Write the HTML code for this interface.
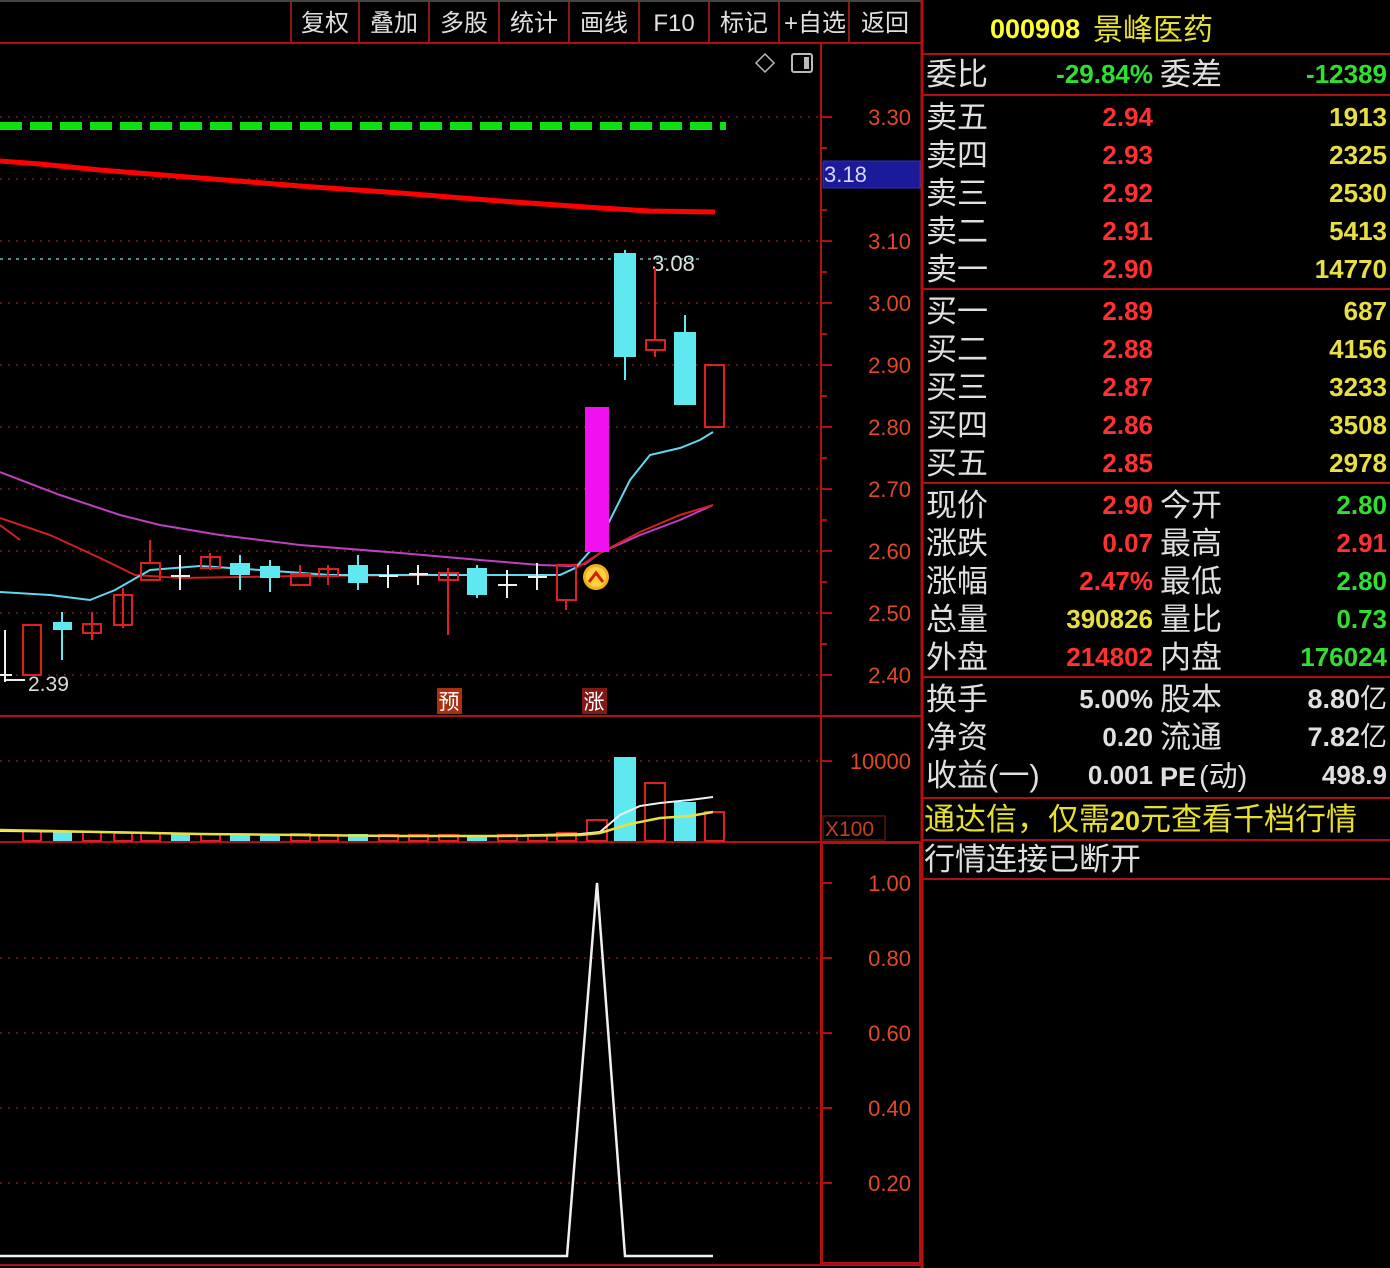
<!DOCTYPE html>
<html><head><meta charset="utf-8"><style>
html,body{margin:0;padding:0;background:#000;width:1390px;height:1268px;overflow:hidden}
svg{display:block}
.t{font-family:"Liberation Sans","Noto Sans CJK SC",sans-serif}
</style></head><body>
<svg width="1390" height="1268" viewBox="0 0 1390 1268" xmlns="http://www.w3.org/2000/svg" class="t">
<rect width="1390" height="1268" fill="#000"/>
<!-- toolbar -->
<g stroke="#8a1a10" stroke-width="2">
<line x1="291" y1="0" x2="291" y2="42"/><line x1="359" y1="0" x2="359" y2="42"/><line x1="429" y1="0" x2="429" y2="42"/><line x1="499" y1="0" x2="499" y2="42"/><line x1="569" y1="0" x2="569" y2="42"/><line x1="639" y1="0" x2="639" y2="42"/><line x1="709" y1="0" x2="709" y2="42"/><line x1="779" y1="0" x2="779" y2="42"/><line x1="849" y1="0" x2="849" y2="42"/>
</g>
<line x1="0" y1="1" x2="922" y2="1" stroke="#444" stroke-width="2"/>
<g fill="#e0e0e0" font-size="24" text-anchor="middle" font-family="Liberation Sans,Noto Sans CJK SC,sans-serif">
<text x="325" y="31">复权</text><text x="394" y="31">叠加</text><text x="464" y="31">多股</text><text x="534" y="31">统计</text><text x="604" y="31">画线</text><text x="674" y="31">F10</text><text x="744" y="31">标记</text><text x="815" y="31">+自选</text><text x="885" y="31">返回</text>
</g>
<line x1="0" y1="43" x2="922" y2="43" stroke="#b01010" stroke-width="2"/>
<!-- frame lines -->
<line x1="821" y1="43" x2="821" y2="1266" stroke="#b01010" stroke-width="2"/>
<line x1="922" y1="0" x2="922" y2="1268" stroke="#b01010" stroke-width="3"/>
<line x1="0" y1="716" x2="922" y2="716" stroke="#b01010" stroke-width="2"/>
<line x1="0" y1="842" x2="922" y2="842" stroke="#b01010" stroke-width="2"/>
<rect x="822" y="843" width="98" height="420" fill="none" stroke="#b01010" stroke-width="2"/>
<line x1="0" y1="1265" x2="922" y2="1265" stroke="#b01010" stroke-width="2"/>
<!-- grid dotted -->
<g stroke="#7a1a10" stroke-width="1.5" stroke-dasharray="2 6">
<line x1="0" y1="117" x2="820" y2="117"/><line x1="0" y1="179" x2="820" y2="179"/><line x1="0" y1="241" x2="820" y2="241"/><line x1="0" y1="303" x2="820" y2="303"/><line x1="0" y1="365" x2="820" y2="365"/><line x1="0" y1="427" x2="820" y2="427"/><line x1="0" y1="489" x2="820" y2="489"/><line x1="0" y1="551" x2="820" y2="551"/><line x1="0" y1="613" x2="820" y2="613"/><line x1="0" y1="675" x2="820" y2="675"/>
<line x1="0" y1="761" x2="820" y2="761"/>
<line x1="0" y1="958" x2="820" y2="958"/><line x1="0" y1="1033" x2="820" y2="1033"/><line x1="0" y1="1108" x2="820" y2="1108"/><line x1="0" y1="1183" x2="820" y2="1183"/>
</g>
<!-- axis ticks & labels -->
<g stroke="#b01010" stroke-width="2">
<line x1="822" y1="117" x2="832" y2="117"/><line x1="822" y1="241" x2="832" y2="241"/><line x1="822" y1="303" x2="832" y2="303"/><line x1="822" y1="365" x2="832" y2="365"/><line x1="822" y1="427" x2="832" y2="427"/><line x1="822" y1="489" x2="832" y2="489"/><line x1="822" y1="551" x2="832" y2="551"/><line x1="822" y1="613" x2="832" y2="613"/><line x1="822" y1="675" x2="832" y2="675"/>
<line x1="822" y1="148" x2="827" y2="148"/><line x1="822" y1="210" x2="827" y2="210"/><line x1="822" y1="272" x2="827" y2="272"/><line x1="822" y1="334" x2="827" y2="334"/><line x1="822" y1="396" x2="827" y2="396"/><line x1="822" y1="458" x2="827" y2="458"/><line x1="822" y1="520" x2="827" y2="520"/><line x1="822" y1="582" x2="827" y2="582"/><line x1="822" y1="644" x2="827" y2="644"/>
<line x1="822" y1="761" x2="832" y2="761"/>
<line x1="822" y1="883" x2="832" y2="883"/><line x1="822" y1="958" x2="832" y2="958"/><line x1="822" y1="1033" x2="832" y2="1033"/><line x1="822" y1="1108" x2="832" y2="1108"/><line x1="822" y1="1183" x2="832" y2="1183"/>
</g>
<g fill="#e04828" font-size="22" text-anchor="end">
<text x="911" y="125">3.30</text><text x="911" y="249">3.10</text><text x="911" y="311">3.00</text><text x="911" y="373">2.90</text><text x="911" y="435">2.80</text><text x="911" y="497">2.70</text><text x="911" y="559">2.60</text><text x="911" y="621">2.50</text><text x="911" y="683">2.40</text>
<text x="911" y="769">10000</text>
<text x="911" y="891">1.00</text><text x="911" y="966">0.80</text><text x="911" y="1041">0.60</text><text x="911" y="1116">0.40</text><text x="911" y="1191">0.20</text>
</g>
<rect x="823" y="161" width="97" height="27" fill="#1a1a9a" stroke="#3030c0"/>
<text x="824" y="182" fill="#d8d8ff" font-size="22">3.18</text>
<rect x="823" y="816" width="62" height="24" fill="none" stroke="#802010"/>
<text x="825" y="836" fill="#c04020" font-size="21">X100</text>
<!-- top icons -->
<path d="M765 54 L774 63 L765 72 L756 63 Z" fill="none" stroke="#bbb" stroke-width="1.5"/>
<rect x="792" y="54" width="20" height="18" rx="2" fill="none" stroke="#bbb" stroke-width="2"/><rect x="804" y="57" width="5" height="12" fill="#bbb"/>
<!-- green dashed -->
<line x1="0" y1="126" x2="726" y2="126" stroke="#10e010" stroke-width="8" stroke-dasharray="22 8"/>
<!-- red thick MA -->
<polyline points="0,161 40,164 100,170 200,178 300,186 400,193 500,201 600,208 650,211 715,212" fill="none" stroke="#f00" stroke-width="5"/>
<!-- 3.08 line -->
<line x1="0" y1="259" x2="700" y2="259" stroke="#70c0c0" stroke-width="1.5" stroke-dasharray="3 5"/>
<text x="652" y="271" fill="#e0e0e0" font-size="22">3.08</text>
<!-- MAs -->
<polyline points="0,472 60,495 120,515 160,525 220,535 300,545 400,553 480,560 540,565 570,566 585,564 600,553 640,535 680,520 713,505" fill="none" stroke="#c040c0" stroke-width="2"/>
<polyline points="0,518 50,535 100,558 135,575 180,578 300,576 450,575 560,575 580,566 600,553 640,532 680,515 713,505" fill="none" stroke="#d02020" stroke-width="2"/>
<polyline points="0,592 50,595 90,600 115,590 150,570 200,566 260,570 330,575 440,575 560,575 575,568 600,540 630,480 650,455 680,448 700,440 713,432" fill="none" stroke="#60d8f0" stroke-width="2"/>
<polyline points="0,525 20,540" fill="none" stroke="#d02020" stroke-width="2"/>
<!-- candles -->
<g stroke-width="2">
<line x1="5" y1="630" x2="5" y2="682" stroke="#eee"/><line x1="0" y1="675" x2="12" y2="675" stroke="#eee"/><line x1="5" y1="680" x2="25" y2="680" stroke="#eee"/>
<text x="28" y="691" fill="#ddd" font-size="21" stroke="none">2.39</text>
<rect x="23" y="625" width="18" height="50" fill="none" stroke="#e02020"/>
<line x1="62" y1="612" x2="62" y2="660" stroke="#60e8f0"/><rect x="53" y="622" width="19" height="8" fill="#60e8f0" stroke="none"/>
<line x1="92" y1="612" x2="92" y2="640" stroke="#e02020"/><rect x="83" y="624" width="18" height="9" fill="none" stroke="#e02020"/>
<line x1="123" y1="588" x2="123" y2="628" stroke="#e02020"/><rect x="114" y="595" width="18" height="30" fill="none" stroke="#e02020"/>
<line x1="150" y1="540" x2="150" y2="563" stroke="#e02020"/><rect x="141" y="563" width="19" height="17" fill="none" stroke="#e02020"/>
<line x1="180" y1="555" x2="180" y2="590" stroke="#eee"/><line x1="171" y1="576" x2="190" y2="576" stroke="#eee"/>
<line x1="210" y1="553" x2="210" y2="570" stroke="#e02020"/><rect x="201" y="557" width="19" height="11" fill="none" stroke="#e02020"/>
<line x1="240" y1="555" x2="240" y2="590" stroke="#60e8f0"/><rect x="230" y="563" width="20" height="12" fill="#60e8f0" stroke="none"/>
<line x1="270" y1="560" x2="270" y2="592" stroke="#60e8f0"/><rect x="260" y="566" width="20" height="12" fill="#60e8f0" stroke="none"/>
<line x1="300" y1="565" x2="300" y2="574" stroke="#e02020"/><rect x="291" y="574" width="19" height="11" fill="none" stroke="#e02020"/>
<line x1="328" y1="565" x2="328" y2="585" stroke="#e02020"/><rect x="319" y="569" width="19" height="7" fill="none" stroke="#e02020"/>
<line x1="358" y1="555" x2="358" y2="590" stroke="#60e8f0"/><rect x="348" y="565" width="20" height="18" fill="#60e8f0" stroke="none"/>
<line x1="388" y1="565" x2="388" y2="588" stroke="#eee"/><line x1="379" y1="576" x2="398" y2="576" stroke="#eee"/>
<line x1="418" y1="565" x2="418" y2="585" stroke="#eee"/><line x1="409" y1="574" x2="428" y2="574" stroke="#eee"/>
<line x1="448" y1="568" x2="448" y2="635" stroke="#e02020"/><rect x="439" y="573" width="19" height="7" fill="none" stroke="#e02020"/>
<line x1="477" y1="565" x2="477" y2="598" stroke="#60e8f0"/><rect x="467" y="568" width="20" height="27" fill="#60e8f0" stroke="none"/>
<line x1="507" y1="570" x2="507" y2="598" stroke="#eee"/><line x1="498" y1="585" x2="517" y2="585" stroke="#eee"/>
<line x1="537" y1="563" x2="537" y2="590" stroke="#eee"/><line x1="528" y1="577" x2="547" y2="577" stroke="#eee"/>
<line x1="566" y1="600" x2="566" y2="610" stroke="#e02020"/><rect x="557" y="565" width="19" height="35" fill="none" stroke="#e02020"/>
<rect x="585" y="407" width="24" height="145" fill="#f010f0" stroke="none"/>
<line x1="625" y1="250" x2="625" y2="380" stroke="#60e8f0"/><rect x="614" y="253" width="22" height="104" fill="#60e8f0" stroke="none"/>
<line x1="655" y1="268" x2="655" y2="357" stroke="#e02020"/><rect x="646" y="340" width="19" height="10" fill="#000" stroke="#e02020"/>
<line x1="685" y1="315" x2="685" y2="405" stroke="#60e8f0"/><rect x="674" y="332" width="22" height="73" fill="#60e8f0" stroke="none"/>
<rect x="705" y="365" width="19" height="62" fill="none" stroke="#e02020"/>
</g>
<!-- up signal -->
<circle cx="596" cy="577" r="13" fill="#f0b020"/>
<circle cx="596" cy="577" r="10" fill="#ffd040"/>
<path d="M589 582 L596 573 L603 582" fill="none" stroke="#d02000" stroke-width="3"/>
<!-- labels -->
<rect x="437" y="688" width="25" height="26" fill="#a83010"/><text x="449" y="709" fill="#fff" font-size="21" text-anchor="middle">预</text>
<rect x="582" y="688" width="25" height="26" fill="#801818"/><text x="594" y="709" fill="#fff" font-size="21" text-anchor="middle">涨</text>
<!-- volume -->
<g stroke-width="2">
<rect x="23" y="831" width="18" height="10" fill="none" stroke="#e02020"/>
<rect x="53" y="832" width="19" height="9" fill="#60e8f0" stroke="none"/>
<rect x="83" y="832" width="18" height="9" fill="none" stroke="#e02020"/>
<rect x="114" y="833" width="18" height="8" fill="none" stroke="#e02020"/>
<rect x="141" y="833" width="19" height="8" fill="none" stroke="#e02020"/>
<rect x="171" y="833" width="19" height="8" fill="#60e8f0" stroke="none"/>
<rect x="201" y="834" width="19" height="7" fill="none" stroke="#e02020"/>
<rect x="230" y="834" width="20" height="7" fill="#60e8f0" stroke="none"/>
<rect x="260" y="834" width="20" height="7" fill="#60e8f0" stroke="none"/>
<rect x="291" y="834" width="19" height="7" fill="none" stroke="#e02020"/>
<rect x="319" y="835" width="19" height="6" fill="none" stroke="#e02020"/>
<rect x="348" y="834" width="20" height="7" fill="#60e8f0" stroke="none"/>
<rect x="379" y="835" width="19" height="6" fill="none" stroke="#e02020"/>
<rect x="409" y="835" width="19" height="6" fill="none" stroke="#e02020"/>
<rect x="439" y="835" width="19" height="6" fill="none" stroke="#e02020"/>
<rect x="467" y="835" width="20" height="6" fill="#60e8f0" stroke="none"/>
<rect x="498" y="835" width="19" height="6" fill="none" stroke="#e02020"/>
<rect x="528" y="835" width="19" height="6" fill="none" stroke="#e02020"/>
<rect x="557" y="833" width="19" height="8" fill="none" stroke="#e02020"/>
<rect x="587" y="820" width="20" height="21" fill="none" stroke="#e02020"/>
<rect x="614" y="757" width="22" height="84" fill="#60e8f0" stroke="none"/>
<rect x="645" y="783" width="20" height="58" fill="none" stroke="#e02020"/>
<rect x="674" y="802" width="22" height="39" fill="#60e8f0" stroke="none"/>
<rect x="705" y="812" width="19" height="29" fill="none" stroke="#e02020"/>
</g>
<polyline points="0,831 100,832 200,834 300,835 400,836 500,836 580,834 600,832 620,815 640,806 660,803 690,800 713,797" fill="none" stroke="#f0f0f0" stroke-width="2"/>
<polyline points="0,830 100,832 200,834 300,835 400,836 500,836 580,835 600,833 630,824 660,818 690,816 713,812" fill="none" stroke="#e8e040" stroke-width="2.5"/>
<!-- indicator -->
<polyline points="0,1256 567,1256 597,883 625,1256 713,1256" fill="none" stroke="#f0f0f0" stroke-width="2.5"/>
<!-- right panel -->
<text x="990" y="38" fill="#ffff30" font-size="27" font-weight="bold">000908</text>
<text x="1093" y="40" fill="#e8e030" font-size="30">景峰医药</text>
<g stroke="#b01010" stroke-width="2">
<line x1="922" y1="54" x2="1390" y2="54"/><line x1="922" y1="95" x2="1390" y2="95"/><line x1="922" y1="289" x2="1390" y2="289"/><line x1="922" y1="483" x2="1390" y2="483"/><line x1="922" y1="677" x2="1390" y2="677"/><line x1="922" y1="798" x2="1390" y2="798"/><line x1="922" y1="840" x2="1390" y2="840"/><line x1="922" y1="879" x2="1390" y2="879"/>
</g>
<g fill="#e0e0e0" font-size="31">
<text x="926" y="85">委比</text><text x="1160" y="85">委差</text>
<text x="926" y="128">卖五</text><text x="926" y="166">卖四</text><text x="926" y="204">卖三</text><text x="926" y="242">卖二</text><text x="926" y="280">卖一</text>
<text x="926" y="322">买一</text><text x="926" y="360">买二</text><text x="926" y="398">买三</text><text x="926" y="436">买四</text><text x="926" y="474">买五</text>
<text x="926" y="516">现价</text><text x="1160" y="516">今开</text>
<text x="926" y="554">涨跌</text><text x="1160" y="554">最高</text>
<text x="926" y="592">涨幅</text><text x="1160" y="592">最低</text>
<text x="926" y="630">总量</text><text x="1160" y="630">量比</text>
<text x="926" y="668">外盘</text><text x="1160" y="668">内盘</text>
<text x="926" y="710">换手</text><text x="1160" y="710">股本</text>
<text x="926" y="748">净资</text><text x="1160" y="748">流通</text>
<text x="926" y="786">收益(一)</text>
<text x="924" y="870">行情连接已断开</text>
</g>
<text x="1160" y="786" fill="#e0e0e0" font-size="27" font-weight="bold">PE</text><text x="1199" y="786" fill="#e0e0e0" font-size="29">(动)</text>
<g font-size="26" font-weight="bold" text-anchor="end">
<text x="1153" y="83" fill="#30e030">-29.84%</text><text x="1387" y="83" fill="#30e030">-12389</text>
<g fill="#ff3030"><text x="1153" y="126">2.94</text><text x="1153" y="164">2.93</text><text x="1153" y="202">2.92</text><text x="1153" y="240">2.91</text><text x="1153" y="278">2.90</text>
<text x="1153" y="320">2.89</text><text x="1153" y="358">2.88</text><text x="1153" y="396">2.87</text><text x="1153" y="434">2.86</text><text x="1153" y="472">2.85</text></g>
<g fill="#e8e040"><text x="1387" y="126">1913</text><text x="1387" y="164">2325</text><text x="1387" y="202">2530</text><text x="1387" y="240">5413</text><text x="1387" y="278">14770</text>
<text x="1387" y="320">687</text><text x="1387" y="358">4156</text><text x="1387" y="396">3233</text><text x="1387" y="434">3508</text><text x="1387" y="472">2978</text></g>
<text x="1153" y="514" fill="#ff3030">2.90</text><text x="1387" y="514" fill="#30e030">2.80</text>
<text x="1153" y="552" fill="#ff3030">0.07</text><text x="1387" y="552" fill="#ff3030">2.91</text>
<text x="1153" y="590" fill="#ff3030">2.47%</text><text x="1387" y="590" fill="#30e030">2.80</text>
<text x="1153" y="628" fill="#e8e040">390826</text><text x="1387" y="628" fill="#30e030">0.73</text>
<text x="1153" y="666" fill="#ff3030">214802</text><text x="1387" y="666" fill="#30e030">176024</text>
<text x="1153" y="708" fill="#e0e0e0">5.00%</text>
<text x="1153" y="746" fill="#e0e0e0">0.20</text>
<text x="1153" y="784" fill="#e0e0e0">0.001</text><text x="1387" y="784" fill="#e0e0e0">498.9</text>
</g>
<text x="1387" y="708" fill="#e0e0e0" font-size="27" text-anchor="end"><tspan font-weight="bold">8.80</tspan>亿</text>
<text x="1387" y="746" fill="#e0e0e0" font-size="27" text-anchor="end"><tspan font-weight="bold">7.82</tspan>亿</text>
<text x="924" y="830" fill="#e8e030" font-size="31">通达信，仅需<tspan font-weight="bold" font-size="27">20</tspan>元查看千档行情</text>
</svg>
</body></html>
